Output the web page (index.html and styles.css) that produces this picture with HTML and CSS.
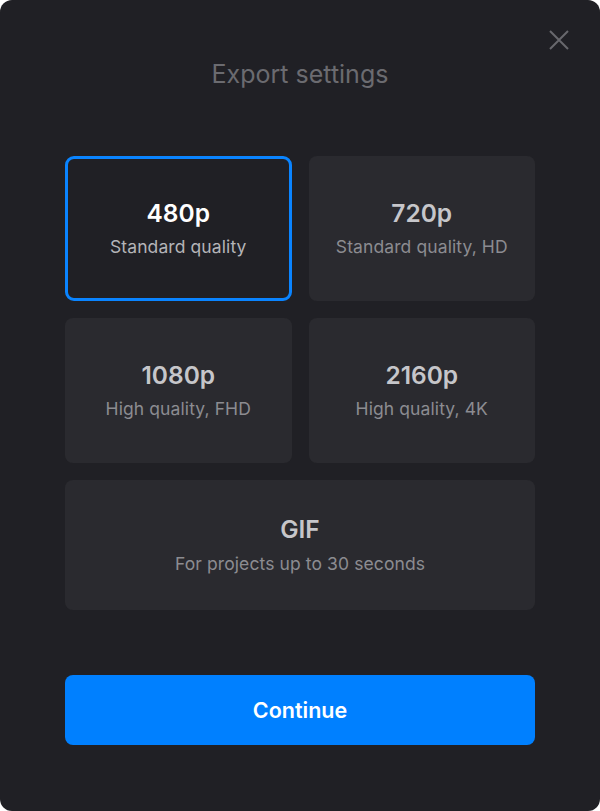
FILE: index.html
```html
<!DOCTYPE html>
<html>
<head>
<meta charset="utf-8">
<link rel="stylesheet" href="styles.css">
</head>
<body>
<div class="dialog">
  <button class="close" aria-label="Close">
    <svg width="22" height="22" viewBox="0 0 22 22"><path d="M2 2 L20 20 M20 2 L2 20" stroke="#68686d" stroke-width="2" fill="none"/></svg>
  </button>
  <h1 class="title">Export settings</h1>
  <div class="options">
    <div class="option selected">
      <div class="opt-title">480p</div>
      <div class="opt-sub">Standard quality</div>
    </div>
    <div class="option">
      <div class="opt-title">720p</div>
      <div class="opt-sub">Standard quality, HD</div>
    </div>
    <div class="option">
      <div class="opt-title">1080p</div>
      <div class="opt-sub">High quality, FHD</div>
    </div>
    <div class="option">
      <div class="opt-title">2160p</div>
      <div class="opt-sub">High quality, 4K</div>
    </div>
    <div class="option wide">
      <div class="opt-title">GIF</div>
      <div class="opt-sub">For projects up to 30 seconds</div>
    </div>
  </div>
  <button class="continue">Continue</button>
</div>
</body>
</html>
```

FILE: styles.css
```css
html, body {
  margin: 0;
  padding: 0;
  background: #ffffff;
}
body {
  font-family: Inter, "Noto Sans", sans-serif;
}
.dialog {
  position: relative;
  box-sizing: border-box;
  width: 600px;
  height: 811px;
  background: #202025;
  border-radius: 12px;
  padding: 59px 65px 0;
  display: flex;
  flex-direction: column;
}
.close {
  position: absolute;
  top: 29px;
  right: 30px;
  width: 22px;
  height: 22px;
  padding: 0;
  border: 0;
  background: none;
  display: flex;
}
.title {
  margin: 0;
  font-size: 25px;
  line-height: 30px;
  font-weight: 400;
  color: #6b6b70;
  text-align: center;
}
.options {
  margin-top: 67px;
  display: grid;
  grid-template-columns: 1fr 1fr;
  grid-template-rows: 145px 145px 130px;
  gap: 17px;
}
.option {
  box-sizing: border-box;
  background: #2a2a2f;
  border-radius: 8px;
  display: flex;
  flex-direction: column;
  align-items: center;
  justify-content: center;
  gap: 8px;
  padding-bottom: 2px;
}
.option.selected {
  background: #202025;
  border: 3px solid #0a84ff;
  border-radius: 9px;
}
.option.wide {
  grid-column: 1 / 3;
  gap: 9px;
}
.opt-title {
  font-size: 24.5px;
  line-height: 30px;
  font-weight: 600;
  color: #c6c6ca;
}
.opt-sub {
  font-size: 17.5px;
  line-height: 22px;
  letter-spacing: 0.1px;
  color: #8c8c91;
}
.selected .opt-title {
  color: #ffffff;
}
.selected .opt-sub {
  color: #b4b4b8;
}
.continue {
  margin-top: 65px;
  height: 70px;
  border: 0;
  border-radius: 8px;
  background: #0080ff;
  color: #ffffff;
  font-family: Inter, "Noto Sans", sans-serif;
  font-size: 21.5px;
  font-weight: 600;
  padding-bottom: 2px;
}
```
